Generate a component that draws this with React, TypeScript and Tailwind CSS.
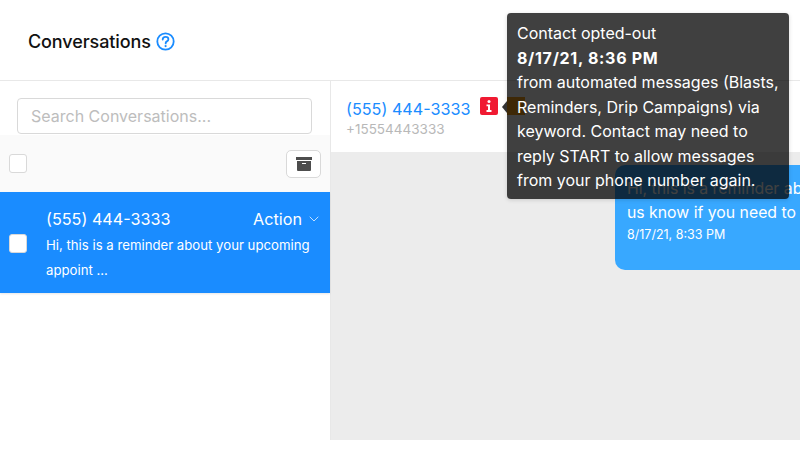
import { ChevronDown } from "lucide-react";

export default function App() {
  return (
    <div className="relative h-[452px] w-[800px] overflow-hidden bg-white font-['Inter',sans-serif] text-[#111]">
      {/* Header */}
      <header className="flex h-[81px] items-center gap-[5px] border-b border-[#e8e8e8] pl-[28px] pt-[2px]">
        <h1 className="text-[18px] font-medium tracking-[-0.1px]">Conversations</h1>
        <svg width="19" height="19" viewBox="0 0 19 19" fill="none">
          <circle cx="9.5" cy="9.5" r="8.2" stroke="#1a8cff" strokeWidth="1.8" />
          <path d="M6.7 7.5c0-1.6 1.2-2.6 2.9-2.6 1.6 0 2.8 1 2.8 2.3 0 1.2-.6 1.7-1.5 2.2-.9.5-1.2.9-1.2 1.7v.3" stroke="#1a8cff" strokeWidth="1.8" strokeLinecap="round" />
          <circle cx="9.6" cy="14.1" r="1.1" fill="#1a8cff" />
        </svg>
      </header>

      <div className="flex h-[359px]">
        {/* Conversation list */}
        <aside className="w-[331px] shrink-0 border-r border-[#e8e8e8]">
          <div className="h-[54px] px-[17px] pt-[17px]">
            <input
              readOnly
              placeholder="Search Conversations..."
              className="h-[36px] w-[295px] rounded border border-[#d9d9d9] bg-white px-[13px] text-[16px] outline-none placeholder:text-[#bdbdbd]"
            />
          </div>
          <div className="flex h-[57px] items-center justify-between bg-[#fafafa] pl-[9px] pr-[9px]">
            <div className="h-[19px] w-[18px] rounded-[3px] border border-[#d9d9d9] bg-white" />
            <button className="flex h-[28px] w-[35px] items-center justify-center rounded-[5px] border border-[#d9d9d9] bg-white">
              <svg width="16" height="14" viewBox="0 0 16 14" fill="#4d4d4d">
                <rect x="0" y="0" width="16" height="3" />
                <path d="M1 4h14v9a1 1 0 0 1-1 1H2a1 1 0 0 1-1-1z" />
                <rect x="6" y="6" width="4" height="1" fill="#fff" />
              </svg>
            </button>
          </div>
          <div className="flex h-[101px] items-center bg-[#1a8cff] text-white shadow-[0_1px_2px_rgba(0,0,0,0.1)]">
            <div className="ml-[9px] mt-[2px] h-[19px] w-[18px] shrink-0 rounded-[3px] border border-[#d9d9d9] bg-white" />
            <div className="ml-[19px] mt-[4px] w-[276px]">
              <div className="flex items-center justify-between">
                <span className="text-[16.2px] leading-[24px]">(555) 444-3333</span>
                <span className="flex items-center gap-[4px] text-[16.2px] leading-[24px]">
                  Action
                  <ChevronDown size={16} strokeWidth={1.1} />
                </span>
              </div>
              <p className="mt-[2px] w-[272px] text-[13.2px] leading-[25px]">
                Hi, this is a reminder about your upcoming appoint ...
              </p>
            </div>
          </div>
        </aside>

        {/* Conversation detail */}
        <main className="flex min-w-0 flex-1 flex-col">
          <div className="flex h-[71px] flex-col justify-center pl-[15px] pt-[2px]">
            <div className="flex items-start gap-[9px]">
              <span className="text-[16.2px] leading-[20px] text-[#1a8cff]">(555) 444-3333</span>
              <span className="-mt-[2px] flex h-[18px] w-[18px] items-center justify-center rounded-[2px] bg-[#f01a32]">
                <svg width="6" height="12" viewBox="0 0 6 12" fill="#fff">
                  <circle cx="3" cy="1.6" r="1.5" />
                  <path d="M0.5 4.5H4v5.5h1.5V12H.5v-2H2V6.3H.5z" />
                </svg>
              </span>
              <span className="-mt-[2px] h-[18px] w-[18px] bg-[#f5a01a]" />
            </div>
            <span className="mt-[2px] text-[13.5px] leading-[16px] text-[#b8b8b8]">+15554443333</span>
          </div>
          <div className="flex-1 bg-[#ececec] pl-[284px] pt-[13px]">
            <div className="h-[105px] w-[400px] rounded-[10px] bg-[#38a8ff] px-[12px] pt-[12px] text-white">
              <p className="whitespace-nowrap text-[15.8px] leading-[24px]">Hi, this is a reminder about</p>
              <p className="whitespace-nowrap text-[15.8px] leading-[24px]">us know if you need to</p>
              <p className="text-[12.5px] leading-[20px]">8/17/21, 8:33 PM</p>
            </div>
          </div>
        </main>
      </div>

      {/* Opt-out tooltip */}
      <div className="absolute left-[507px] top-[13px] h-[186px] w-[282px] rounded-[4px] bg-black/75 pl-[10px] pr-[6px] pt-[8px] text-[16px] leading-[24.5px] text-white shadow-[0_1px_4px_rgba(0,0,0,0.15)]">
        <div className="absolute left-[-5px] top-[88px] h-0 w-0 border-y-[6px] border-r-[5px] border-y-transparent border-r-[#333]" />
        <p>Contact opted-out</p>
        <p className="font-bold tracking-[0.7px]">8/17/21, 8:36 PM</p>
        <p>from automated messages (Blasts, Reminders, Drip Campaigns) via keyword. Contact may need to reply START to allow messages from your phone number again.</p>
      </div>
    </div>
  );
}
